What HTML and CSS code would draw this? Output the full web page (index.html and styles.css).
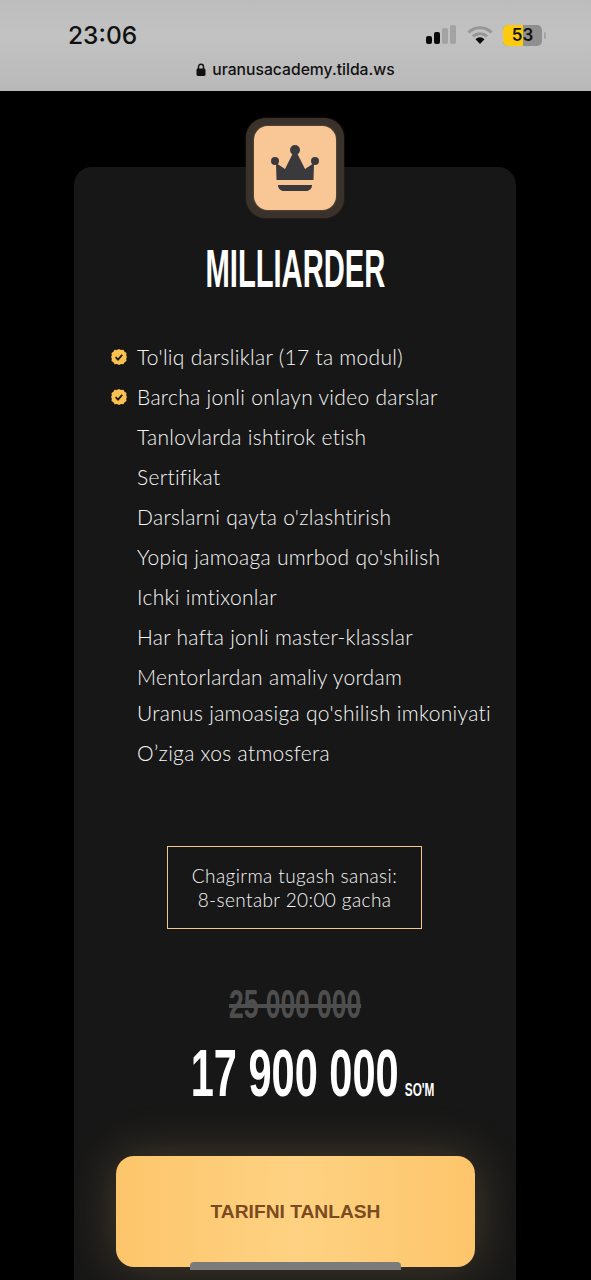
FILE: index.html
```html
<!DOCTYPE html>
<html lang="en">

<head>
    <meta charset="UTF-8">
    <meta name="viewport" content="width=device-width, initial-scale=1.0">
    <title>Milliarder</title>
    <link rel="stylesheet" href="styles.css">
</head>

<body>
    <header class="topbar">
        <div class="status">
            <span class="time">23:06</span>
            <div class="status-icons">
                <svg class="signal" width="30" height="20" viewBox="0 0 30 20">
                    <rect x="0" y="11" width="6" height="8" rx="2" fill="#0b0b0b" />
                    <rect x="8" y="7" width="6" height="12" rx="2" fill="#0b0b0b" />
                    <rect x="16" y="3" width="6" height="16" rx="2" fill="#a3a3a3" />
                    <rect x="24" y="0" width="6" height="19" rx="2" fill="#a3a3a3" />
                </svg>
                <svg class="wifi" width="26" height="20" viewBox="0 0 26 20">
                    <path d="M1.500 7.500a16.500 16.500 0 0 1 23 0" fill="none" stroke="#979797" stroke-width="3" />
                    <path d="M6 11.500a10 10 0 0 1 14 0" fill="none" stroke="#979797" stroke-width="3" />
                    <path d="M8.500 14.200a6.400 6.400 0 0 1 9 0L13 19z" fill="#0b0b0b" />
                </svg>
                <div class="battery">
                    <div class="battery-fill"></div>
                    <span class="battery-num">53</span>
                </div>
                <div class="battery-cap"></div>
            </div>
        </div>
        <div class="url">
            <svg width="10" height="13" viewBox="0 0 10 13">
                <path d="M2.500 6V3.800a2.500 2.500 0 0 1 5 0V6" fill="none" stroke="#111" stroke-width="1.400" />
                <rect x="0.500" y="5.500" width="9" height="7.500" rx="1.400" fill="#111" />
            </svg>
            <span>uranusacademy.tilda.ws</span>
        </div>
    </header>

    <main class="page">
        <section class="card">
            <div class="badge">
                <div class="badge-inner">
                    <svg width="48" height="46" viewBox="0 0 48 46">
                        <circle cx="24" cy="5" r="5" fill="#3a3a3c" />
                        <circle cx="4" cy="16" r="4" fill="#3a3a3c" />
                        <circle cx="44" cy="16" r="4" fill="#3a3a3c" />
                        <path d="M5 18L14 24 22 8h4l8 16 9-6-.5 17h-37z" fill="#3a3a3c" />
                        <path d="M7 40h34c0 3.500-2.500 6-6 6H13c-3.500 0-6-2.500-6-6z" fill="#3a3a3c" />
                    </svg>
                </div>
            </div>

            <h1 class="title"><span>MILLIARDER</span></h1>

            <ul class="features">
                <li>
                    <svg class="check" width="16" height="16" viewBox="0 0 16 16">
                        <path d="M8 0l2.100 1 2.300-.2 1.200 2 1.900 1.300-.3 2.300.8 1.600-.8 1.600.3 2.300-1.900 1.300-1.200 2-2.300-.2L8 16l-2.100-1-2.300.2-1.200-2L.5 11.900.8 9.600 0 8l.8-1.600L.5 4.100l1.900-1.300 1.200-2 2.300.2z" fill="#fbc14f" />
                        <path d="M4.600 8.200l2.400 2.400 4.200-4.800" fill="none" stroke="#1a1a1a" stroke-width="1.800" />
                    </svg>
                    To'liq darsliklar (17 ta modul)
                </li>
                <li>
                    <svg class="check" width="16" height="16" viewBox="0 0 16 16">
                        <path d="M8 0l2.100 1 2.300-.2 1.200 2 1.900 1.300-.3 2.300.8 1.600-.8 1.600.3 2.300-1.900 1.300-1.200 2-2.300-.2L8 16l-2.100-1-2.300.2-1.200-2L.5 11.900.8 9.600 0 8l.8-1.600L.5 4.100l1.900-1.300 1.200-2 2.300.2z" fill="#fbc14f" />
                        <path d="M4.600 8.200l2.400 2.400 4.200-4.800" fill="none" stroke="#1a1a1a" stroke-width="1.800" />
                    </svg>
                    Barcha jonli onlayn video darslar
                </li>
                <li>Tanlovlarda ishtirok etish</li>
                <li>Sertifikat</li>
                <li>Darslarni qayta o'zlashtirish</li>
                <li>Yopiq jamoaga umrbod qo'shilish</li>
                <li>Ichki imtixonlar</li>
                <li>Har hafta jonli master-klasslar</li>
                <li>Mentorlardan amaliy yordam</li>
                <li class="tight">Uranus jamoasiga qo'shilish imkoniyati</li>
                <li>O’ziga xos atmosfera</li>
            </ul>

            <div class="deadline">Chagirma tugash sanasi:<br>8-sentabr 20:00 gacha</div>

            <div class="old-price"><span>25 000 000</span></div>
            <div class="price">
                <div class="price-inner"><span class="amount">17 900 000</span><span class="currency">SO'M</span></div>
            </div>

            <a class="buy" href="#">TARIFNI TANLASH</a>
        </section>
    </main>

    <div class="home-bar"></div>
</body>

</html>
```

FILE: styles.css
```css
* {
    margin: 0;
    padding: 0;
    box-sizing: border-box;
}

html,
body {
    height: 1280px;
    overflow: hidden;
    background: #000;
}

body {
    position: relative;
    font-family: "Lato", sans-serif;
}

.topbar {
    height: 91px;
    background: linear-gradient(180deg, #bdbdbd 0%, #c2c2c2 40%, #b9b9b9 100%);
    font-family: "Inter", "Liberation Sans", sans-serif;
    color: #111;
}

.status {
    display: flex;
    justify-content: space-between;
    align-items: center;
    height: 56px;
    padding: 14px 45px 0 68px;
}

.time {
    font-size: 24.5px;
    font-weight: 500;
}

.status-icons {
    display: flex;
    align-items: center;
}

.signal {
    margin-right: 11px;
}

.wifi {
    margin-right: 10px;
}

.battery {
    position: relative;
    width: 39px;
    height: 21px;
    border-radius: 5px;
    background: #8f8f8f;
    overflow: hidden;
    font-size: 17px;
    font-weight: 600;
    line-height: 21px;
    text-align: center;
    color: #111;
}

.battery-fill {
    position: absolute;
    left: 0;
    top: 0;
    bottom: 0;
    width: 20px;
    background: #fdcb0e;
}

.battery-num {
    position: relative;
}

.battery-cap {
    width: 2px;
    height: 7px;
    margin-left: 2px;
    border-radius: 0 2px 2px 0;
    background: #a3a3a3;
}

.url {
    display: flex;
    justify-content: center;
    align-items: center;
    gap: 6px;
    height: 26px;
    font-size: 15.7px;
    font-weight: 500;
}

.page {
    padding: 76px 75px 0 74px;
}

.card {
    height: 1113px;
    padding-top: 1px;
    border-radius: 18px 18px 0 0;
    background: #171717;
    color: #f6f6f6;
}

.badge {
    width: 98px;
    height: 100px;
    margin: -50px auto 0;
    padding: 8px;
    border-radius: 20px;
    background: #3a322a;
    box-shadow: 0 0 2px #3a322a;
}

.badge-inner {
    display: flex;
    align-items: center;
    justify-content: center;
    height: 100%;
    border-radius: 14px;
    background: #f8c795;
    box-shadow: 0 0 2px #8a6f52;
}

.title {
    margin-top: 23px;
    height: 56px;
    text-align: center;
    font-family: "Liberation Sans", sans-serif;
    font-size: 53px;
    line-height: 56px;
    font-weight: 700;
    color: #fff;
}

.title span {
    display: inline-block;
    transform: scaleX(0.55);
}

.features {
    margin-top: 40px;
    list-style: none;
    font-size: 21px;
    font-weight: 300;
    letter-spacing: 0.3px;
}

.features li {
    position: relative;
    height: 40px;
    line-height: 40px;
    padding-left: 63px;
    white-space: nowrap;
}

.features .tight {
    margin-top: -4px;
}

.check {
    position: absolute;
    left: 37px;
    top: 12px;
}

.deadline {
    width: 255px;
    height: 83px;
    margin: 73px auto 0 93px;
    padding-top: 17px;
    border: 1.5px solid #f6c691;
    text-align: center;
    font-size: 19px;
    font-weight: 300;
    letter-spacing: 0.4px;
    line-height: 24px;
}

.old-price {
    margin-top: 53px;
    text-align: center;
    font-family: "Liberation Sans", sans-serif;
    font-size: 40px;
    line-height: 44px;
    font-weight: 700;
    color: #4e4e4e;
}

.old-price span {
    display: inline-block;
    transform: scaleX(0.66);
    text-decoration: line-through;
}

.price {
    margin-top: 11px;
    padding-left: 35px;
    text-align: center;
    font-family: "Liberation Sans", sans-serif;
    font-weight: 700;
    color: #fff;
}

.price-inner {
    display: inline-flex;
    align-items: baseline;
    transform: scaleX(0.62);
}

.amount {
    font-size: 67px;
    line-height: 72px;
}

.currency {
    margin-left: 10px;
    font-size: 19px;
}

.buy {
    display: flex;
    align-items: center;
    justify-content: center;
    width: 359px;
    height: 111px;
    margin: 47px 0 0 42px;
    border-radius: 18px;
    background: linear-gradient(90deg, #fdc56b 0%, #fed282 50%, #fdc56b 100%);
    box-shadow: 0 0 50px rgba(255, 210, 130, 0.22);
    font-family: "Liberation Sans", sans-serif;
    font-size: 19.2px;
    font-weight: 700;
    color: #7a4a20;
    text-decoration: none;
}

.home-bar {
    position: absolute;
    left: 190px;
    top: 1262px;
    width: 211px;
    height: 8px;
    border-radius: 4px 4px 0 0;
    background: #7b7b7b;
}
```
